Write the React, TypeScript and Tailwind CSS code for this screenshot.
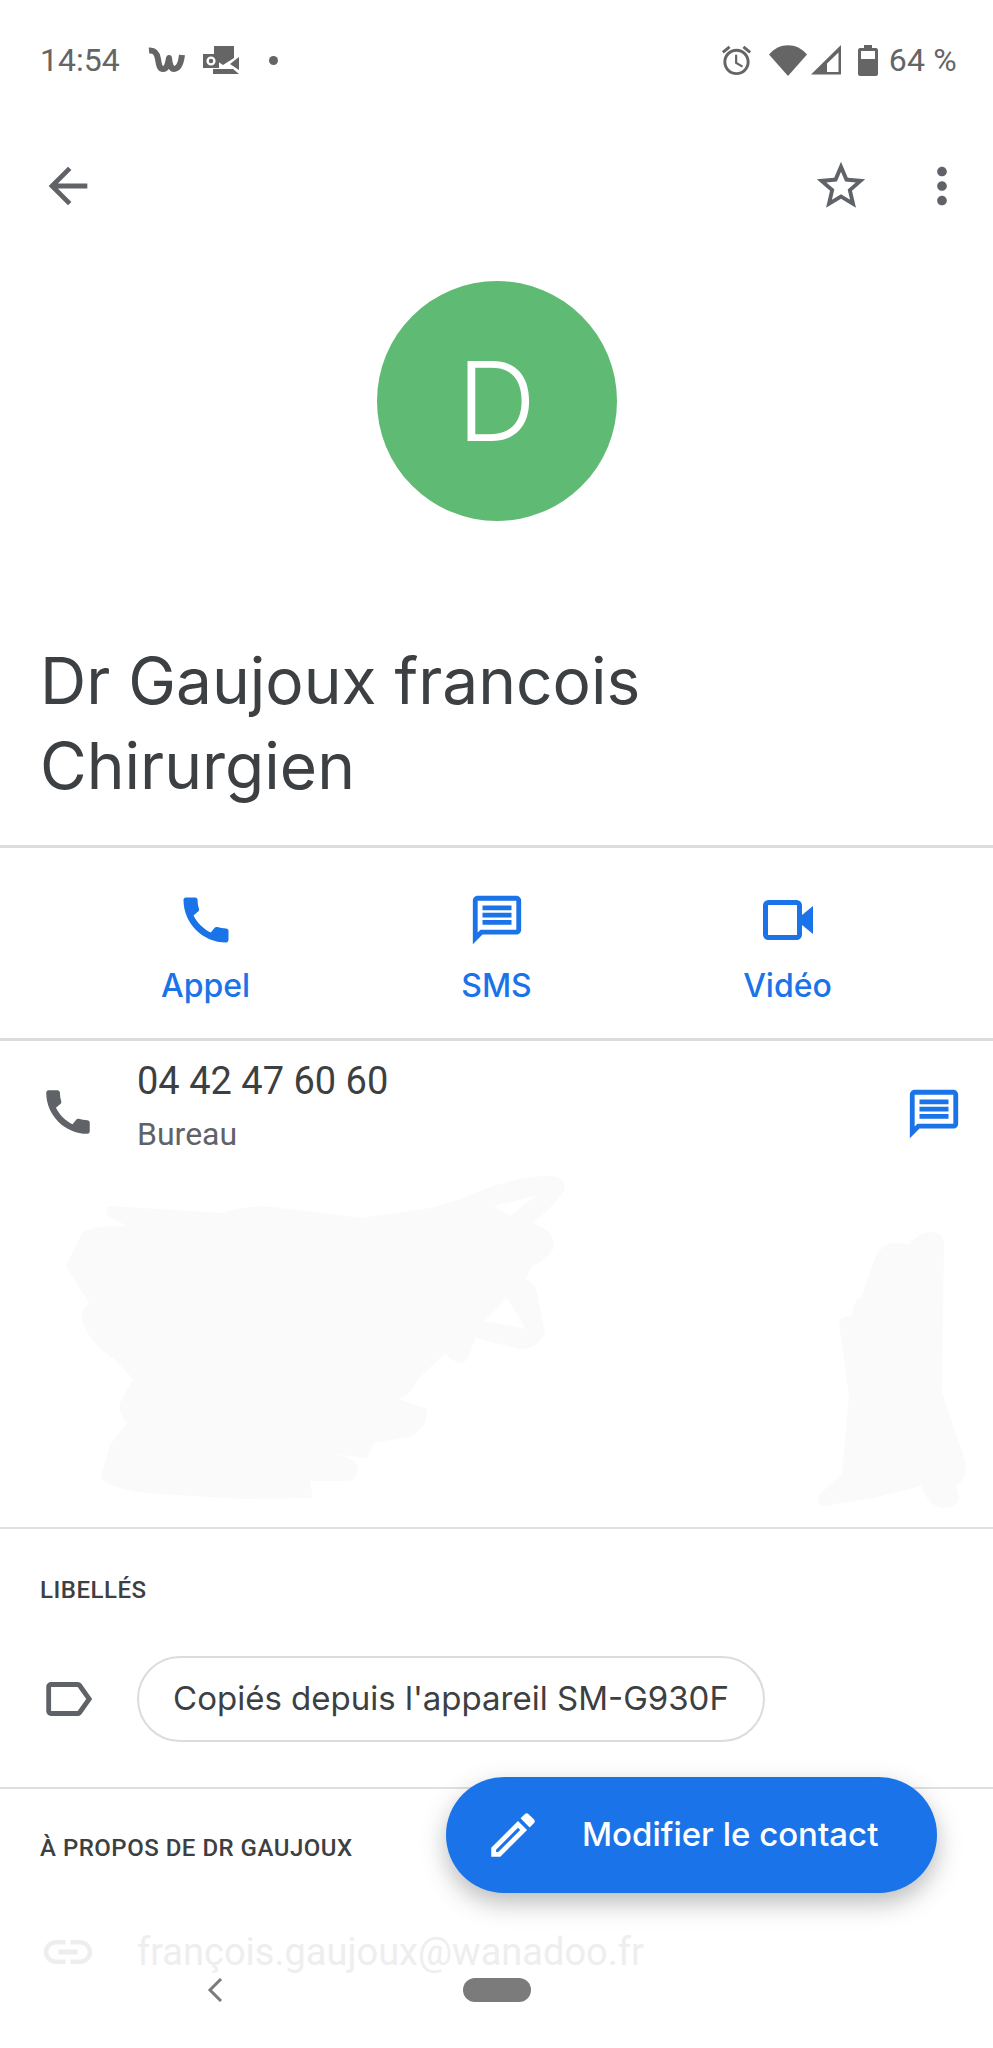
const grey = '#5f6368'

function Icon({ d, size = 58, color = grey, className = '' }: { d: string; size?: number; color?: string; className?: string }) {
  return (
    <svg width={size} height={size} viewBox="0 0 24 24" fill={color} className={`shrink-0 ${className}`}>
      <path d={d} />
    </svg>
  )
}

const paths = {
  back: 'M20 11H7.83l5.59-5.59L12 4l-8 8 8 8 1.41-1.41L7.83 13H20v-2z',
  star: 'M22 9.24l-7.19-.62L12 2 9.19 8.63 2 9.24l5.46 4.73L5.82 21 12 17.27 18.18 21l-1.63-7.03L22 9.24zM12 15.4l-3.76 2.27 1-4.28-3.32-2.88 4.38-.38L12 6.1l1.71 4.04 4.38.38-3.32 2.88 1 4.28L12 15.4z',
  more: 'M12 8c1.1 0 2-.9 2-2s-.9-2-2-2-2 .9-2 2 .9 2 2 2zm0 2c-1.1 0-2 .9-2 2s.9 2 2 2 2-.9 2-2-.9-2-2-2zm0 6c-1.1 0-2 .9-2 2s.9 2 2 2 2-.9 2-2-.9-2-2-2z',
  call: 'M20.01 15.38c-1.23 0-2.42-.2-3.53-.56-.35-.12-.74-.03-1.01.24l-1.57 1.97c-2.83-1.35-5.48-3.9-6.89-6.83l1.95-1.66c.27-.28.35-.67.24-1.02-.37-1.11-.56-2.3-.56-3.53 0-.54-.45-.99-.99-.99H4.19C3.65 3 3 3.24 3 3.99 3 13.28 10.73 21 20.01 21c.71 0 .99-.63.99-1.18v-3.45c0-.54-.45-.99-.99-.99z',
  message: 'M20 2H4c-1.1 0-1.99.9-1.99 2L2 22l4-4h14c1.1 0 2-.9 2-2V4c0-1.1-.9-2-2-2zm0 14H5.17L4 17.17V4h16v12zM6 12h12v2H6zm0-3h12v2H6zm0-3h12v2H6z',
  label: 'M17.63 5.84C17.27 5.33 16.67 5 16 5L5 5.01C3.9 5.01 3 5.9 3 7v10c0 1.1.9 1.99 2 1.99L16 19c.67 0 1.27-.33 1.63-.84L22 12l-4.37-6.16zM16 17H5V7h11l3.55 5L16 17z',
  edit: 'M14.06 9.02l.92.92L5.92 19H5v-.92l9.06-9.06M17.66 3c-.25 0-.51.1-.7.29l-1.83 1.83 3.75 3.75 1.83-1.83c.39-.39.39-1.02 0-1.41l-2.34-2.34c-.2-.2-.45-.29-.71-.29zm-3.6 3.19L3 17.25V21h3.75L17.81 9.94l-3.75-3.75z',
  link: 'M3.9 12c0-1.71 1.39-3.1 3.1-3.1h4V7H7c-2.76 0-5 2.24-5 5s2.24 5 5 5h4v-1.9H7c-1.71 0-3.1-1.39-3.1-3.1zM8 13h8v-2H8v2zm9-6h-4v1.9h4c1.71 0 3.1 1.39 3.1 3.1s-1.39 3.1-3.1 3.1h-4V17h4c2.76 0 5-2.24 5-5s-2.24-5-5-5z',
  alarm: 'M22 5.72l-4.6-3.86-1.29 1.53 4.6 3.86L22 5.72zM7.88 3.39L6.6 1.86 2 5.71l1.29 1.53 4.59-3.85zM12.5 8H11v6l4.75 2.85.75-1.23-4-2.37V8zM12 4c-4.97 0-9 4.03-9 9s4.03 9 9 9 9-4.03 9-9-4.03-9-9-9zm0 16c-3.87 0-7-3.13-7-7s3.13-7 7-7 7 3.13 7 7-3.13 7-7 7z',
}

function StatusBar() {
  return (
    <div className="flex h-[120px] items-center justify-between pl-10 pr-9 text-[32px] text-[#656565] font-['Roboto',sans-serif]">
      <div className="flex items-center">
        <span className="w-[108px]">14:54</span>
        <svg width="38" height="26" viewBox="0 0 38 26" fill="none" stroke="#656565" strokeWidth="6" strokeLinejoin="round">
          <path d="M1 3.5 C7 3 9 6 10 12 C11 19 12 22 15 22 C19 22 20 17 21 11 C21.5 17 23 22 26 22 C31 22 33 16 34 8" />
        </svg>
        <svg width="36" height="28" viewBox="0 0 36 28" className="ml-[17px]">
          <path d="M11 0H31V12L20 19L11 13Z" fill="#656565" />
          <path d="M0 8H16V22H0Z" fill="#656565" />
          <circle cx="8" cy="15" r="3.4" fill="none" stroke="#fff" strokeWidth="2.4" />
          <path d="M36 11V24L27 18Z" fill="#656565" />
          <path d="M10 28V23H30L36 28Z" fill="#656565" />
        </svg>
        <span className="ml-[30px] h-[9px] w-[9px] rounded-full bg-[#656565]" />
      </div>
      <div className="flex items-center">
        <Icon d={paths.alarm} size={35} color="#656565" />
        <svg width="38" height="31" viewBox="0 0 38 31" className="ml-[15px]">
          <path d="M0 9.5 C10 -3 28 -3 38 9.5 L19 31Z" fill="#656565" />
        </svg>
        <svg width="30" height="30" viewBox="0 0 30 30" className="ml-1">
          <path d="M0 29.5 L30 0 V29.5Z M16 27H27.5V7.5L16 18.5Z" fill="#656565" fillRule="evenodd" />
        </svg>
        <svg width="20" height="31" viewBox="0 0 20 31" className="ml-[17px]">
          <path d="M6 0H14V3H18C19 3 20 4 20 5V29C20 30 19 31 18 31H2C1 31 0 30 0 29V5C0 4 1 3 2 3H6Z M3 6V14H17V6Z" fill="#656565" fillRule="evenodd" />
        </svg>
        <span className="ml-[11px] tracking-[0.2px]">64 %</span>
      </div>
    </div>
  )
}

function ActionButton({ icon, label }: { icon: React.ReactNode; label: string }) {
  return (
    <div className="flex flex-col items-center">
      <div className="flex h-[60px] items-center justify-center">{icon}</div>
      <span className="mt-[14px] text-[32px] leading-[44px] font-medium text-[#1a73e8]">{label}</span>
    </div>
  )
}

function Scribble() {
  return (
    <svg viewBox="0 1185 993 340" width="993" height="340" className="block" fill="#fafafa" fillRule="evenodd">
      <path d="M108 1220 L222 1227 Q245 1219 272 1221 L361 1232 L431 1222 L462 1213 Q510 1190 551 1190 Q568 1192 564 1205 Q555 1220 532 1237 Q556 1245 554 1262 Q545 1275 532 1280 L526 1293 Q538 1300 538 1313 L545 1347 Q538 1363 519 1363 L475 1352 Q468 1377 462 1377 Q450 1375 446 1367 L418 1393 Q412 1408 399 1413 L427 1423 Q428 1440 412 1450 L374 1457 L367 1472 L323 1467 Q358 1470 358 1483 Q356 1495 348 1495 L310 1495 L313 1512 L241 1513 L146 1507 Q105 1502 101 1490 L111 1457 L127 1437 Q117 1425 120 1417 L133 1393 L114 1373 Q80 1350 82 1325 L89 1317 L66 1280 L82 1247 Q90 1240 127 1240 L108 1230 Q105 1222 108 1220Z M535 1210 L494 1220 L510 1230Z M507 1312 L484 1335 L526 1343Z" />
      <path d="M928 1246 Q943 1245 944 1257 L942 1407 L966 1477 Q966 1495 956 1500 L959 1513 Q955 1522 944 1522 Q930 1522 921 1500 L874 1512 L823 1520 Q815 1515 820 1508 L842 1488 L849 1410 L839 1337 Q843 1328 852 1330 Q855 1310 861 1313 L871 1283 Q880 1255 896 1257 L909 1258 Q918 1248 928 1246Z" />
    </svg>
  )
}

export default function App() {
  return (
    <div className="relative h-[2048px] w-[993px] overflow-hidden bg-white font-['Inter',sans-serif] text-[#3c4043]">
      <StatusBar />

      <div className="flex h-[58px] items-center justify-between pl-[39px] pr-[22px] mt-[37px]">
        <Icon d={paths.back} />
        <div className="flex items-center gap-[43px]">
          <Icon d={paths.star} />
          <Icon d={paths.more} />
        </div>
      </div>

      <div className="mt-[66px] flex justify-center">
        <div className="flex h-[240px] w-[240px] items-center justify-center rounded-full bg-[#5fba74] text-[110px] font-light text-white">
          D
        </div>
      </div>

      <h1 className="mt-[117px] pl-10 text-[64px] leading-[85px] font-normal">
        Dr Gaujoux francois
        <br />
        Chirurgien
      </h1>

      <div className="mt-[37px] h-[3px] bg-[#dadce0]" />

      <div className="mx-auto grid h-[190px] w-[873px] grid-cols-3 pt-[42px]">
        <ActionButton icon={<Icon d={paths.call} size={60} color="#1a73e8" />} label="Appel" />
        <ActionButton icon={<Icon d={paths.message} color="#1a73e8" />} label="SMS" />
        <ActionButton
          icon={
            <svg width="50" height="40" viewBox="0 0 50 40" fill="#1a73e8">
              <rect x="2.5" y="2.5" width="34" height="35" rx="3" fill="none" stroke="#1a73e8" strokeWidth="5" />
              <path d="M39 15 L50 6 V34 L39 25Z" />
            </svg>
          }
          label="Vidéo"
        />
      </div>

      <div className="h-[3px] bg-[#dadce0]" />

      <div className="flex h-[130px] items-center pl-[39px] pr-[30px] font-['Roboto',sans-serif]">
        <Icon d={paths.call} className="mt-3" />
        <div className="ml-10 flex-1">
          <div className="text-[38px] leading-[48px]">04 42 47 60 60</div>
          <div className="mt-[7px] text-[32px] leading-[44px] text-[#5f6368]">Bureau</div>
        </div>
        <Icon d={paths.message} color="#1a73e8" className="mt-4" />
      </div>

      <Scribble />
      <div className="mt-[16px] h-[2px] bg-[#e0e0e0]" />

      <div className="pl-10 pt-[46px] text-[24px] leading-[30px] font-medium tracking-[0.5px] font-['Roboto',sans-serif]">LIBELLÉS</div>

      <div className="mt-[51px] flex items-center pl-[39px]">
        <Icon d={paths.label} />
        <div className="ml-10 flex h-[86px] w-[628px] items-center justify-center rounded-full border-2 border-[#dadce0] text-[33px] font-normal">
          Copiés depuis l'appareil SM-G930F
        </div>
      </div>

      <div className="mt-[45px] h-[2px] bg-[#e0e0e0]" />

      <div className="pl-10 pt-[44px] text-[24px] leading-[30px] font-medium tracking-[0.5px] font-['Roboto',sans-serif]">À PROPOS DE DR GAUJOUX</div>

      <div className="mt-[60px] flex items-center pl-[39px]">
        <Icon d={paths.link} color="#eeeeee" />
        <span className="ml-10 font-['Roboto',sans-serif] text-[38px] text-[#eeeeee]">françois.gaujoux@wanadoo.fr</span>
      </div>

      <div className="absolute left-[446px] top-[1777px] flex h-[116px] w-[491px] items-center rounded-full bg-[#1a73e8] pl-[38px] shadow-[0_10px_24px_rgba(60,64,67,0.35)]">
        <Icon d={paths.edit} color="#ffffff" />
        <span className="ml-[40px] text-[33px] font-medium text-white">Modifier le contact</span>
      </div>

      <div className="absolute bottom-0 left-0 right-0 flex h-[70px] justify-center bg-white">
        <svg width="16" height="24" viewBox="0 0 16 24" fill="none" stroke="#7b7b7b" strokeWidth="3" className="absolute left-[207px] top-0">
          <path d="M14 1 L3 12 L14 23" />
        </svg>
        <div className="h-[24px] w-[68px] rounded-full bg-[#7b7b7b]" />
      </div>
    </div>
  )
}
